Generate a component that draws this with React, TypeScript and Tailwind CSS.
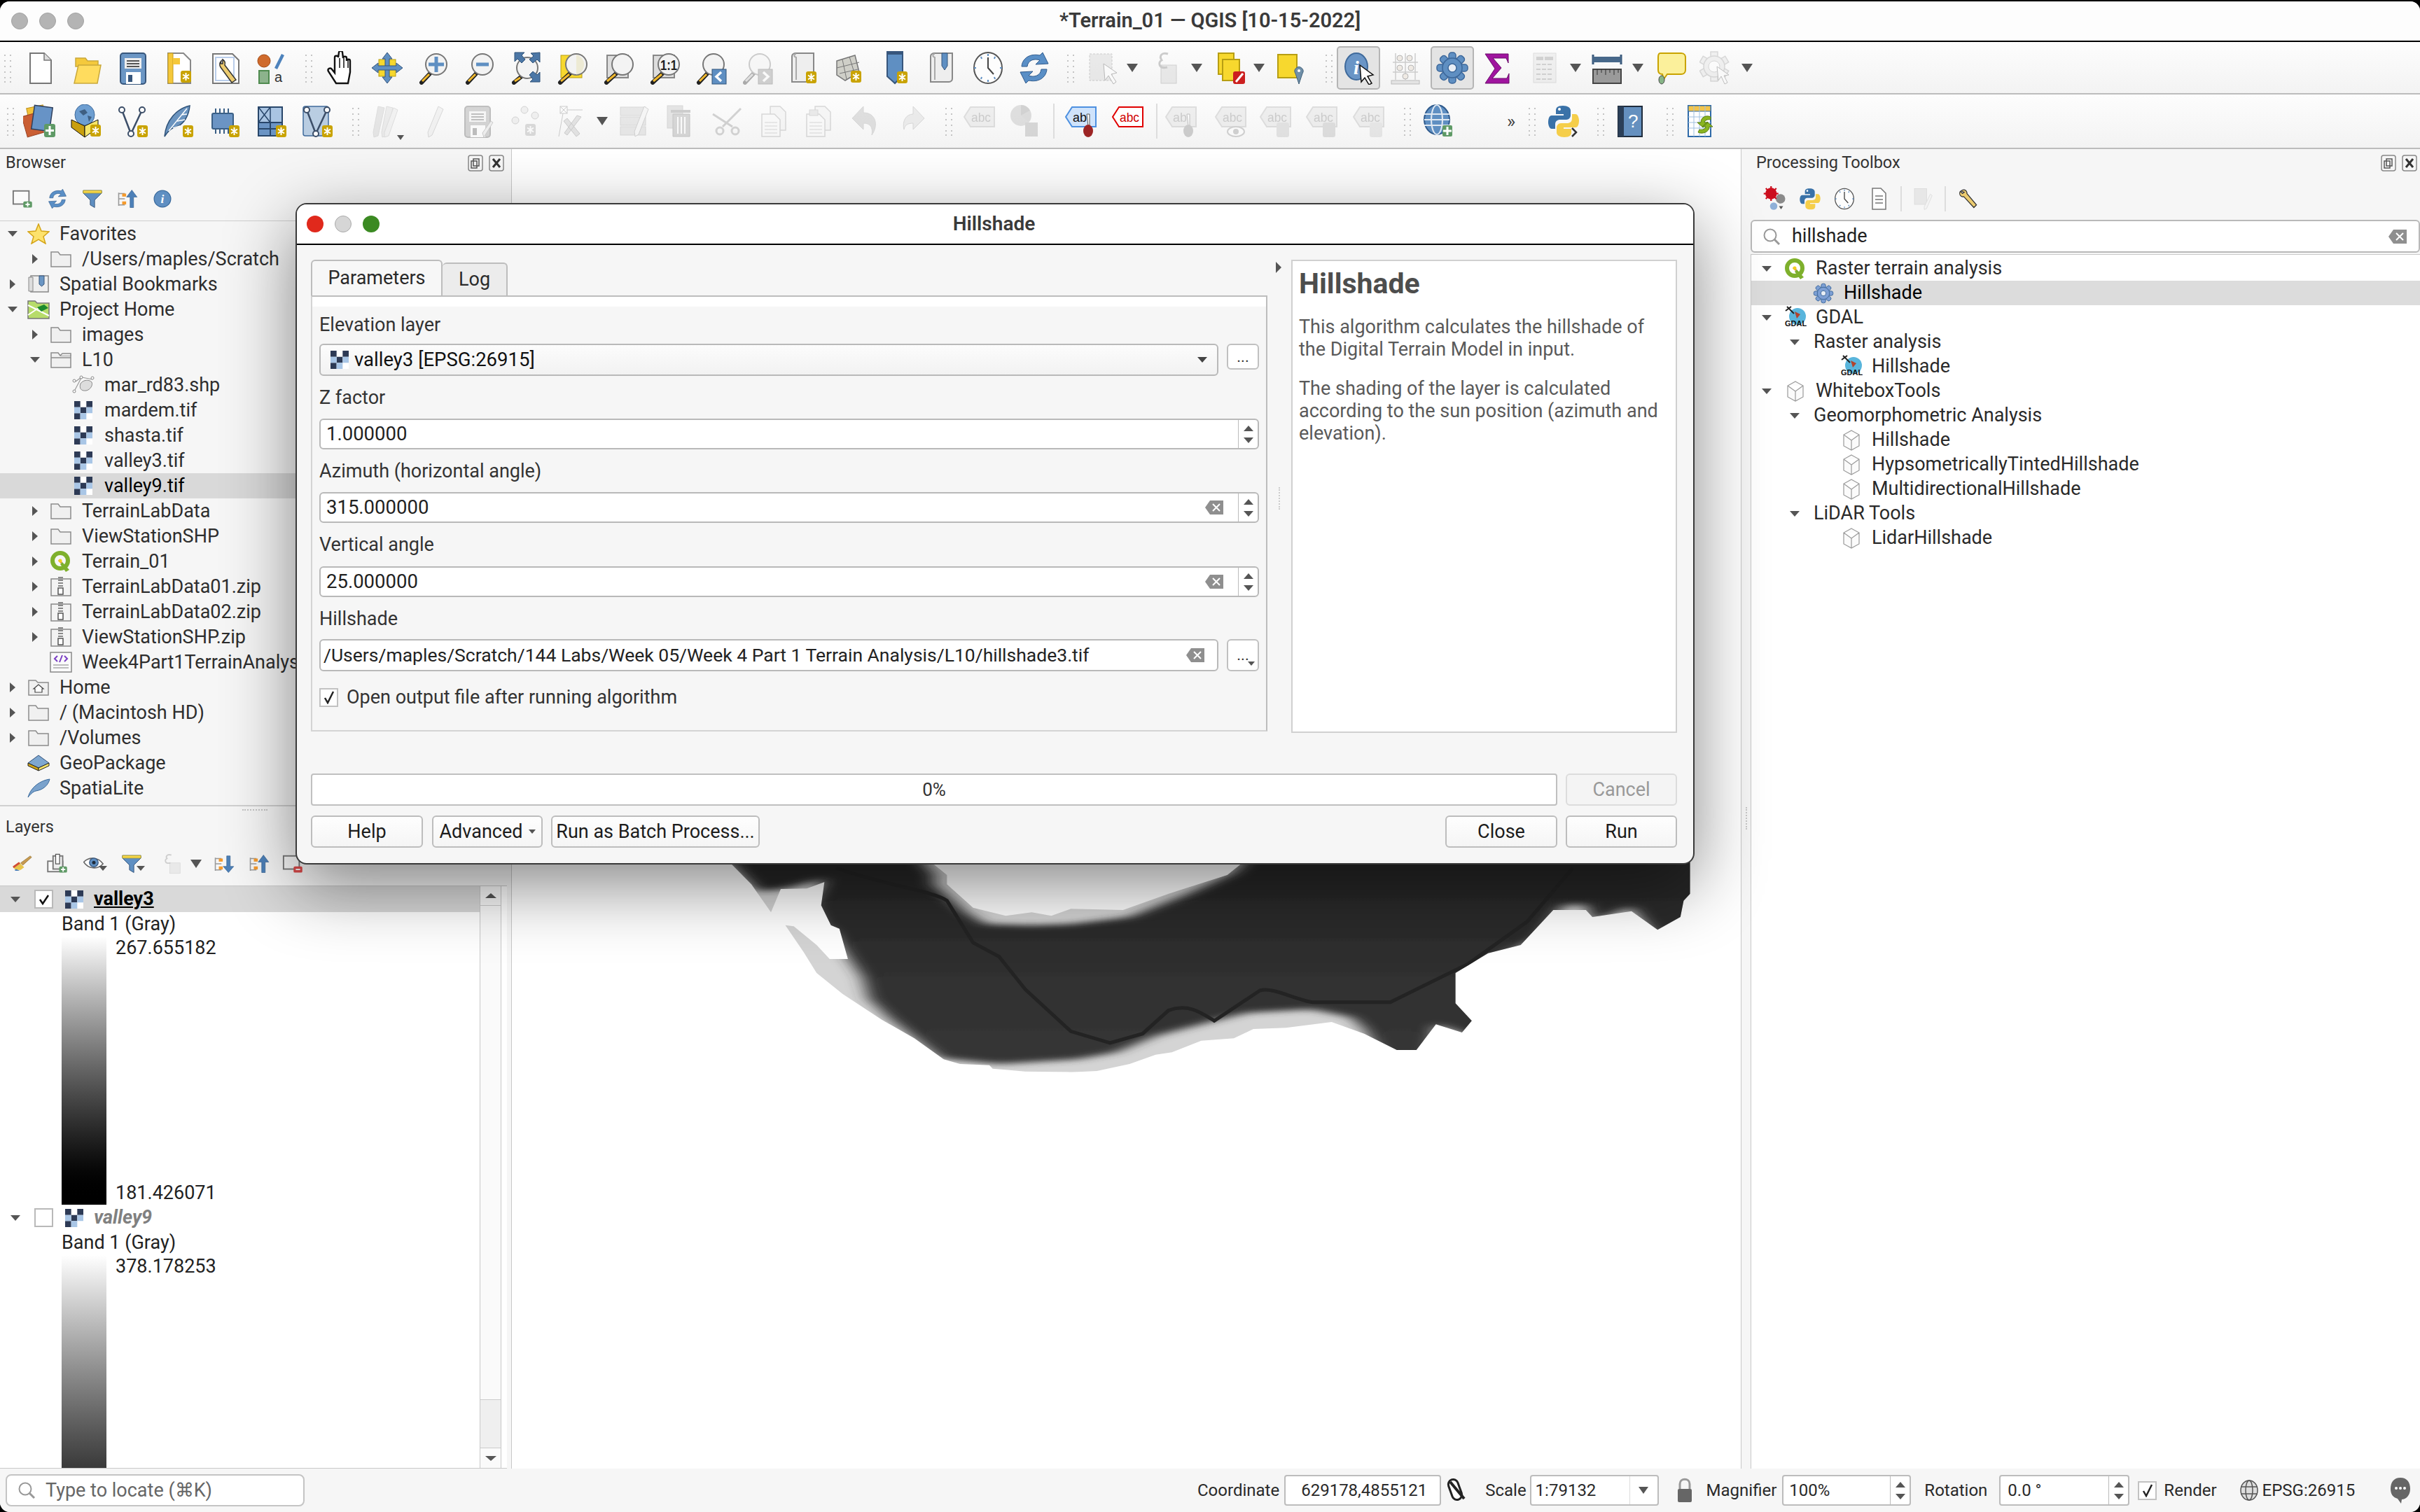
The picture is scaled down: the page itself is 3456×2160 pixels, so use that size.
import type { ReactNode } from 'react';

const Svg = ({ s = 48, dim = false, children }: { s?: number; dim?: boolean; children: ReactNode }) => (
  <svg width={s} height={s} viewBox="0 0 48 48" className={dim ? 'shrink-0 opacity-35 grayscale' : 'shrink-0'}>
    {children}
  </svg>
);

const Badge = ({ x = 30, y = 30 }: { x?: number; y?: number }) => (
  <g>
    <rect x={x} y={y} width="15" height="17" rx="3" fill="#c9a300" />
    <path
      d={`M${x + 7.5} ${y + 3}v11M${x + 3} ${y + 5.5}l9 6M${x + 12} ${y + 5.5}l-9 6`}
      stroke="#fff"
      strokeWidth="2"
    />
  </g>
);

const Lens = ({ children, cx = 28, cy = 19 }: { children?: ReactNode; cx?: number; cy?: number }) => (
  <g>
    <path d={`M${cx - 8} ${cy + 12}L7 45`} stroke="#222" strokeWidth="6" strokeLinecap="round" />
    <path d={`M${cx - 10} ${cy + 14}L8 43`} stroke="#f0b82e" strokeWidth="3" />
    <circle cx={cx} cy={cy} r="15" fill="#f3f3f3" stroke="#777" strokeWidth="2" />
    {children}
  </g>
);

const NewDoc = () => (
  <Svg>
    <path d="M9 3h20l10 10v33H9z" fill="#fff" stroke="#777" strokeWidth="2" />
    <path d="M29 3v10h10" fill="#ddd" stroke="#777" strokeWidth="1.5" />
  </Svg>
);
const OpenFolder = () => (
  <Svg>
    <path d="M8 10h14l3 4h15v8H8z" fill="#f4c93c" stroke="#c9a83a" strokeWidth="1.5" />
    <path d="M12 20h32l-5 26H6z" fill="#ffdc5e" stroke="#c9a83a" strokeWidth="1.5" />
  </Svg>
);
const SaveIcon = ({ pen = false }: { pen?: boolean }) => (
  <Svg dim={pen}>
    <rect x="6" y="3" width="36" height="44" rx="4" fill="#6b96c4" stroke="#37567c" strokeWidth="2" />
    <path d="M12 10h24v15H12z" fill="#eee" />
    <path d="M15 14h18M15 18h18M15 22h18" stroke="#555" strokeWidth="2" />
    <path d="M14 30h21v17H14z" fill="#fff" />
    <path d="M17 34h6v10h-6z" fill="#37567c" />
    {pen && <path d="M46 26L33 47l-2-6 12-17z" fill="#ddd" stroke="#777" />}
  </Svg>
);
const NewLayout = () => (
  <Svg>
    <path d="M8 3h22l10 10v33H8z" fill="#fff" stroke="#888" strokeWidth="2" />
    <path d="M8 3h7v43H8z" fill="#f5c83a" stroke="#c49b1f" />
    <path d="M15 10h10v9H15z" fill="#f5c83a" />
    <Badge x={26} y={28} />
  </Svg>
);
const LayoutManager = () => (
  <Svg>
    <path d="M6 4h28l9 9v33H6z" fill="#fff" stroke="#777" strokeWidth="2" />
    <path d="M10 9h26v33H10z" fill="none" stroke="#b9cdea" strokeWidth="2" />
    <path d="M18 14a7 7 0 0 0-1 9l16 22 6-4-16-21a7 7 0 0 0-3-8v6h-3z" fill="#eccb6f" stroke="#333" strokeWidth="1.5" />
  </Svg>
);
const StyleManager = () => (
  <Svg>
    <circle cx="13" cy="14" r="9" fill="#cf6a2c" stroke="#a34a14" />
    <path d="M28 24l10-20 4 2-10 20z" fill="#4d82bc" />
    <rect x="6" y="28" width="14" height="18" fill="#8cb38c" stroke="#4e8a4e" strokeWidth="2" />
    <text x="28" y="44" fontSize="20" fill="#333" fontFamily="Liberation Sans">a</text>
  </Svg>
);
const Hand = () => (
  <Svg>
    <path
      d="M17 46l-11-17c-2-4 3-6 5-3l4 5V9c0-3 5-3 5 0l1-7c0-3 5-3 5 0l1 8c0-3 5-3 5 0v4c0-3 5-3 5 0v16l-3 16z"
      fill="#fff"
      stroke="#111"
      strokeWidth="2.4"
    />
    <path d="M22 10v14M28 10v14M34 13v11" stroke="#111" strokeWidth="1.5" />
  </Svg>
);
const PanToSel = () => (
  <Svg>
    <rect x="12" y="12" width="24" height="24" fill="#f7d82e" stroke="#b79e12" />
    <path d="M24 2l7 9h-4v26h4l-7 9-7-9h4V11h-4z" fill="#5f8fc2" stroke="#37567c" />
    <path d="M2 24l9-7v4h26v-4l9 7-9 7v-4H11v4z" fill="#5f8fc2" stroke="#37567c" />
  </Svg>
);
const ZoomIn = () => (
  <Svg>
    <Lens>
      <path d="M28 8v22M17 19h22" stroke="#5f8fc2" strokeWidth="5" />
    </Lens>
  </Svg>
);
const ZoomOut = () => (
  <Svg>
    <Lens>
      <path d="M19 19h18" stroke="#5f8fc2" strokeWidth="5" />
    </Lens>
  </Svg>
);
const ZoomFull = () => (
  <Svg>
    <Lens cx={26} cy={24} />
    <path d="M8 2h14l-4 4 5 6-5 5-6-6-4 4zM44 2v14l-4-4-6 5-5-5 6-5-4-4zM44 44H30l4-4-5-6 5-5 6 5 4-4z" fill="#4c77a6" stroke="#2f5278" />
  </Svg>
);
const ZoomSel = () => (
  <Svg>
    <rect x="8" y="6" width="30" height="32" fill="#f7d82e" stroke="#b79e12" />
    <Lens cx={30} cy={19} />
    <path d="M30 5a15 15 0 0 1 0 29z" fill="#e9e4bf" opacity=".6" />
  </Svg>
);
const ZoomLayer = () => (
  <Svg>
    <rect x="8" y="6" width="30" height="32" fill="#ddd" stroke="#888" strokeWidth="2" />
    <Lens cx={30} cy={19} />
  </Svg>
);
const ZoomOne = () => (
  <Svg>
    <rect x="8" y="6" width="30" height="32" fill="#ddd" stroke="#888" strokeWidth="2" />
    <Lens cx={30} cy={19}>
      <text x="18" y="27" fontSize="20" fontWeight="700" fill="#222" fontFamily="Liberation Sans" textLength="24" lengthAdjust="spacingAndGlyphs">1:1</text>
    </Lens>
  </Svg>
);
const ZoomLast = ({ next = false }: { next?: boolean }) => (
  <Svg dim={next}>
    <Lens />
    <rect x="26" y="26" width="20" height="21" fill="#5f8fc2" stroke="#2f5278" />
    <path d={next ? 'M33 30l7 6.5-7 6.5' : 'M39 30l-7 6.5 7 6.5'} stroke="#fff" strokeWidth="3.5" fill="none" />
  </Svg>
);
const ScrollPaper = ({ badge = false, pin = false }: { badge?: boolean; pin?: boolean }) => (
  <Svg>
    <path d="M8 8c0-5 5-5 5-5h26v36c0 5-5 5-5 5H8z" fill="#eee" stroke="#888" strokeWidth="2" />
    <path d="M14 4c-3 0-4 4 0 5v32" fill="none" stroke="#aaa" strokeWidth="2" />
    {pin && <path d="M24 3h8v18l-4 6-4-6z" fill="#5f8fc2" stroke="#37567c" />}
    {badge && <Badge x={28} y={29} />}
  </Svg>
);
const MeshBadge = () => (
  <Svg>
    <path d="M6 14L32 6l6 24-20 12-12-8z" fill="#cfcfc8" stroke="#777" strokeWidth="1.5" />
    <path d="M14 12l6 28M6 24l32-8M10 32l26-6M24 8l8 26" stroke="#777" fill="none" />
    <Badge x={26} y={28} />
  </Svg>
);
const NewBookmark = () => (
  <Svg>
    <path d="M12 1h22v34l-11 11-11-10z" fill="#5f8fc2" stroke="#37567c" strokeWidth="2" />
    <path d="M12 1h22v4H12z" fill="#37567c" />
    <Badge x={26} y={29} />
  </Svg>
);
const ClockIcon = ({ s = 48 }: { s?: number }) => (
  <Svg s={s}>
    <ellipse cx="24" cy="24" rx="20" ry="22" fill="#fdfdfd" stroke="#555" strokeWidth="2" />
    <path d="M24 9v15l8 9" fill="none" stroke="#444" strokeWidth="2" />
    <path d="M24 4v3M24 41v3M4 24h3M41 24h3M14 8l1 3M34 8l-1 3M14 40l1-3M34 40l-1-3" stroke="#5f8fc2" strokeWidth="2" />
  </Svg>
);
const RefreshIcon = ({ s = 48 }: { s?: number }) => (
  <Svg s={s}>
    <path d="M6 22C7 10 18 3 32 6l4-4 8 16-18 1 6-6c-8-3-17 0-18 9z" fill="#5a8fc6" stroke="#2f5a8c" />
    <path d="M42 26c-1 12-12 19-26 16l-4 4-8-16 18-1-6 6c8 3 17 0 18-9z" fill="#5a8fc6" stroke="#2f5a8c" />
  </Svg>
);
const SelectIcon = () => (
  <Svg dim>
    <rect x="6" y="4" width="32" height="38" fill="#ccc" stroke="#777" strokeDasharray="3 2" />
    <path d="M26 18l2 24 5-7 7 12 4-3-7-11 8-2z" fill="#fff" stroke="#444" />
  </Svg>
);
const ExprSelect = () => (
  <Svg dim>
    <rect x="14" y="20" width="22" height="26" fill="#ccc" stroke="#888" />
    <path d="M24 4c-9-3-13 3-9 9-6 3-4 13 8 10" fill="none" stroke="#777" strokeWidth="3" />
  </Svg>
);
const Deselect = () => (
  <Svg>
    <rect x="7" y="3" width="22" height="30" fill="#f7d82e" stroke="#b79e12" strokeWidth="2" />
    <rect x="13" y="12" width="24" height="30" fill="#f7d82e" stroke="#b79e12" strokeWidth="2" />
    <rect x="28" y="29" width="17" height="18" rx="3" fill="#cc1f1f" />
    <path d="M32 44l10-12" stroke="#fff" strokeWidth="3" />
  </Svg>
);
const SelectPin = () => (
  <Svg>
    <rect x="7" y="5" width="27" height="33" fill="#f7d82e" stroke="#b79e12" strokeWidth="2" />
    <path d="M37 47l-5-15a6 6 0 1 1 10 0z" fill="#6f8fa8" stroke="#44637c" />
    <circle cx="37" cy="28" r="2" fill="#fff" />
  </Svg>
);
const Identify = () => (
  <Svg>
    <ellipse cx="21" cy="22" rx="16" ry="19" fill="#6a95c6" stroke="#3f6a9b" strokeWidth="2" />
    <text x="21" y="33" fontSize="28" fontStyle="italic" fontWeight="700" textAnchor="middle" fill="#fff" fontFamily="Liberation Serif">i</text>
    <path d="M26 20l2 24 5-6 6 10 4-2-6-10 8-2z" fill="#fff" stroke="#111" strokeWidth="1.5" />
  </Svg>
);
const Abacus = () => (
  <Svg>
    <path d="M10 3v38M24 3v38M38 3v38M6 16h36M6 30h36" stroke="#ccc" strokeWidth="1.5" />
    <circle cx="16" cy="10" r="4" fill="#efeae4" stroke="#b5b5b5" />
    <circle cx="30" cy="10" r="4" fill="#efeae4" stroke="#b5b5b5" />
    <circle cx="16" cy="24" r="4" fill="#efeae4" stroke="#b5b5b5" />
    <circle cx="32" cy="24" r="4" fill="#efeae4" stroke="#b5b5b5" />
    <circle cx="24" cy="36" r="4" fill="#efeae4" stroke="#b5b5b5" />
    <rect x="4" y="42" width="40" height="5" fill="#e4e4e4" stroke="#bbb" />
  </Svg>
);
const Gear = ({ s = 48, fill = '#5f8fc2' }: { s?: number; fill?: string }) => (
  <Svg s={s}>
    <g fill={fill} stroke="#3c679a" strokeWidth="1.5">
      {[0, 45, 90, 135, 180, 225, 270, 315].map((a) => (
        <rect key={a} x="19" y="2" width="10" height="14" rx="4" transform={`rotate(${a} 24 24)`} />
      ))}
      <circle cx="24" cy="24" r="14" />
    </g>
    <circle cx="24" cy="24" r="6" fill="#e8eef6" stroke="#3c679a" strokeWidth="1.5" />
  </Svg>
);
const Sigma = () => (
  <Svg>
    <path d="M7 4h33v13l-3-7H18l12 14-13 15h21l3-7v14H7l14-21z" fill="#a0149f" stroke="#6a0c6a" />
  </Svg>
);
const TableDim = () => (
  <Svg dim>
    <rect x="8" y="3" width="32" height="42" fill="#ddd" stroke="#aaa" />
    <path d="M12 8h10v5H12zM24 8h12v5H24z" fill="#888" />
    <path d="M12 19h24M12 26h24M12 33h24M12 40h24" stroke="#888" strokeWidth="2" strokeDasharray="6 2" />
  </Svg>
);
const Ruler = () => (
  <Svg>
    <path d="M4 5v14M44 5v14" stroke="#3b5a7c" strokeWidth="3" />
    <rect x="4" y="8" width="40" height="8" fill="#47688a" />
    <rect x="4" y="26" width="40" height="20" fill="#9a9a9a" stroke="#444" strokeWidth="2" />
    <path d="M10 26v8M16 26v5M22 26v8M28 26v5M34 26v8M40 26v5" stroke="#333" />
  </Svg>
);
const Annotation = () => (
  <Svg>
    <path d="M8 3h30c5 0 6 4 6 6v18c0 4-3 6-6 6H18l-5 7-2-7c-4 0-6-2-6-6V9c0-3 1-6 3-6z" fill="#fbf09b" stroke="#c9a300" strokeWidth="2" />
    <ellipse cx="10" cy="41" rx="4" ry="6" fill="#87b587" stroke="#444" />
  </Svg>
);
const SettingsDim = () => (
  <Svg dim>
    <g fill="#ddd" stroke="#999" strokeWidth="1.5">
      {[0, 60, 120, 180, 240, 300].map((a) => (
        <rect key={a} x="16" y="1" width="10" height="12" transform={`rotate(${a} 21 22)`} />
      ))}
      <circle cx="21" cy="22" r="15" />
    </g>
    <circle cx="21" cy="22" r="8" fill="#fff" stroke="#999" />
    <path d="M25 22l2 20 4-6 5 11 4-2-5-10 7-1z" fill="#fff" stroke="#555" />
  </Svg>
);
const DataSources = () => (
  <Svg>
    <rect x="8" y="3" width="24" height="34" transform="rotate(-12 20 20)" fill="#f3c23a" stroke="#b98e18" />
    <rect x="2" y="14" width="24" height="30" transform="rotate(-16 14 30)" fill="#ca5e33" stroke="#9b4526" />
    <rect x="14" y="3" width="26" height="34" transform="rotate(8 27 20)" fill="#6793c6" stroke="#2f3f5c" strokeWidth="1.5" />
    <rect x="30" y="28" width="16" height="19" rx="3" fill="#5f9a66" />
    <path d="M38 31v13M32 37.5h12" stroke="#fff" strokeWidth="3" />
  </Svg>
);
const NewGpkg = () => (
  <Svg>
    <ellipse cx="22" cy="15" rx="14" ry="15" fill="#6d9ed1" stroke="#3f6a9b" />
    <path d="M14 10l8-3 4 5-6 4zM26 16l6 2-4 7z" fill="#3e5f82" />
    <path d="M3 22l19 9v16L3 33z" fill="#c99f0e" stroke="#111" />
    <path d="M22 31l19-9v11L22 47z" fill="#f6e66a" stroke="#111" />
    <Badge x={30} y={29} />
  </Svg>
);
const NewVertex = ({ framed = false }: { framed?: boolean }) => (
  <Svg>
    {framed && <rect x="4" y="3" width="36" height="42" rx="3" fill="#b9cde2" stroke="#3f6a9b" strokeWidth="1.5" />}
    <path d="M9 8l13 34 16-34" fill="none" stroke="#3c4e68" strokeWidth="2.5" />
    <circle cx="9" cy="8" r="4" fill="#fff" stroke="#3c4e68" strokeWidth="2" />
    <circle cx="38" cy="8" r="4" fill="#fff" stroke="#3c4e68" strokeWidth="2" />
    <circle cx="22" cy="42" r="4" fill="#fff" stroke="#3c4e68" strokeWidth="2" />
    <Badge x={31} y={30} />
  </Svg>
);
const Feather = ({ badge = true }: { badge?: boolean }) => (
  <Svg>
    <path d="M4 46C6 22 22 6 40 2c-1 12-7 28-24 32-4 1-8 6-12 12z" fill="#6b94bf" stroke="#2f5278" strokeWidth="1.5" />
    <path d="M10 38c8-10 16-20 26-32M16 34l10-3M22 24l11-2M28 15l8-1" stroke="#fff" strokeWidth="1.5" fill="none" />
    {badge && <Badge x={30} y={30} />}
  </Svg>
);
const Chip = () => (
  <Svg>
    <path d="M11 6v36M17 6v36M23 6v36M29 6v36" stroke="#3a5f86" strokeWidth="2" />
    <rect x="6" y="13" width="30" height="22" rx="2" fill="#6b94c4" stroke="#3a5f86" strokeWidth="2" />
    <Badge x={30} y={30} />
  </Svg>
);
const NewMesh = () => (
  <Svg>
    <rect x="6" y="4" width="34" height="22" fill="#a9c4e2" stroke="#28466a" strokeWidth="2" />
    <path d="M6 4l17 22M23 4L6 26M23 4v22" stroke="#28466a" strokeWidth="1.5" />
    <rect x="6" y="26" width="34" height="19" fill="#6b94c4" stroke="#28466a" strokeWidth="2" />
    <path d="M23 26v19M6 35h34" stroke="#28466a" strokeWidth="2" />
    <Badge x={31} y={30} />
  </Svg>
);
const Pencils = () => (
  <Svg dim>
    <path d="M14 3l9 2-9 40-6 2-1-7z" fill="#c9c2bd" stroke="#aaa" />
    <path d="M26 3l9 2-9 40-6 2-1-7z" fill="#d8d2cd" stroke="#aaa" />
    <path d="M36 5l6 3-13 37-6 2 0-7z" fill="#e6e2de" stroke="#aaa" />
  </Svg>
);
const Pencil = () => (
  <Svg dim>
    <path d="M32 3l7 4-16 37-5 3-1-7z" fill="#e5e5de" stroke="#999" />
  </Svg>
);
const AddPoints = () => (
  <Svg dim>
    <circle cx="21" cy="8" r="5" fill="#ddd" stroke="#888" />
    <circle cx="36" cy="16" r="5" fill="#ddd" stroke="#888" />
    <circle cx="8" cy="23" r="5" fill="#ddd" stroke="#888" />
    <Badge x={22} y={28} />
  </Svg>
);
const VertexTool = () => (
  <Svg dim>
    <rect x="6" y="3" width="10" height="10" fill="#fff" stroke="#777" />
    <path d="M6 3l10 10M16 3L6 13M16 8h22M10 13L4 46" stroke="#777" />
    <path d="M16 20l18 22-5 4-18-22zM36 18L16 44l-4-3 18-25z" fill="#bbb" stroke="#777" />
  </Svg>
);
const EditTable = () => (
  <Svg dim>
    <rect x="4" y="4" width="36" height="12" fill="#c8c8b0" stroke="#999" />
    <rect x="4" y="18" width="36" height="12" fill="#c8c8b0" stroke="#999" />
    <rect x="4" y="32" width="36" height="12" fill="#c8c8b0" stroke="#999" />
    <path d="M38 3l6 4-14 36-5 3-1-7z" fill="#eee" stroke="#888" />
  </Svg>
);
const Trash = () => (
  <Svg dim>
    <rect x="5" y="2" width="22" height="32" fill="#c9b9ad" stroke="#999" />
    <path d="M10 8h28v4H10z" fill="#a5726a" />
    <path d="M13 14h24v32H13z" fill="#c78c82" stroke="#8f5a52" />
    <path d="M20 18v24M25 18v24M30 18v24" stroke="#fff" strokeWidth="2" />
  </Svg>
);
const Scissors = () => (
  <Svg dim>
    <path d="M4 14l28 18M44 6L18 32" stroke="#888" strokeWidth="3" />
    <circle cx="36" cy="38" r="5" fill="none" stroke="#a88" strokeWidth="3" />
    <circle cx="14" cy="38" r="5" fill="none" stroke="#a88" strokeWidth="3" />
  </Svg>
);
const CopyDoc = ({ clip = false }: { clip?: boolean }) => (
  <Svg dim>
    <path d="M20 3h14l8 8v26H20z" fill="#eee" stroke="#999" strokeWidth="1.5" />
    <path d="M8 14h18l8 8v24H8z" fill="#f8f8f8" stroke="#999" strokeWidth="1.5" />
    <path d="M12 26h18M12 31h18M12 36h18M12 41h18" stroke="#999" />
    {clip && <rect x="12" y="8" width="12" height="8" fill="#ccc" stroke="#999" />}
  </Svg>
);
const UndoIcon = ({ redo = false }: { redo?: boolean }) => (
  <Svg dim>
    <path
      d={redo ? 'M26 3l16 17-16 16v-9c-8 0-12 3-13 9-3-12 3-22 13-22z' : 'M22 3L6 20l16 16v-9c10 0 14 6 12 17 10-14 6-32-12-32z'}
      fill={redo ? '#c9d2d8' : '#c9a898'}
      stroke="#999"
    />
  </Svg>
);
const AbcTag = ({ label = 'abc', pin = '', eye = false, badge = '', red = false, blue = false }: { label?: string; pin?: string; eye?: boolean; badge?: string; red?: boolean; blue?: boolean }) => (
  <Svg dim={!red && !blue}>
    <path
      d="M12 4h34v28H12L3 18z"
      fill={red ? '#fff' : blue ? '#cfe3fb' : '#ddd8c8'}
      stroke={red ? '#e00000' : blue ? '#4d90e0' : '#aaa'}
      strokeWidth="2"
    />
    <text x="13" y="25" fontSize="19" fill={red ? '#d00000' : blue ? '#111' : '#777'} fontFamily="Liberation Sans" textLength={label === 'ab' ? 20 : 28} lengthAdjust="spacingAndGlyphs">{label}</text>
    {pin && <path d="M33 14h4v16l-2 1z" fill="#fff" stroke="#555" />}
    {pin && <ellipse cx="35" cy="38" rx="7" ry="9" fill={pin} />}
    {eye && <ellipse cx="32" cy="39" rx="12" ry="7" fill="#fff" stroke="#888" strokeWidth="2" />}
    {eye && <circle cx="32" cy="39" r="4" fill="#888" />}
    {badge && <rect x="26" y="26" width="18" height="21" rx="3" fill={badge} />}
  </Svg>
);
const PieIcon = () => (
  <Svg dim>
    <circle cx="20" cy="16" r="15" fill="#b9b06a" />
    <path d="M20 16V1a15 15 0 0 1 13 8z" fill="#c87a6a" />
    <path d="M20 16l13-7a15 15 0 0 1-2 16z" fill="#88b09a" />
    <rect x="26" y="26" width="18" height="20" fill="#88a088" />
  </Svg>
);
const Globe = () => (
  <Svg>
    <ellipse cx="22" cy="22" rx="18" ry="21" fill="#5f8fc2" stroke="#2f5a8c" strokeWidth="2" />
    <ellipse cx="22" cy="22" rx="8" ry="21" fill="none" stroke="#dfe8f2" strokeWidth="2" />
    <path d="M4 14h36M4 22h36M4 30h36" stroke="#dfe8f2" strokeWidth="2" />
    <rect x="30" y="30" width="14" height="16" rx="2" fill="#5f9a66" />
    <path d="M37 32v12M31 38h12" stroke="#fff" strokeWidth="3" />
  </Svg>
);
const Python = ({ s = 48, arrow = true }: { s?: number; arrow?: boolean }) => (
  <Svg s={s}>
    <path d="M23 2c-8 0-10 3-10 7v5h11v2H7c-4 0-5 6-5 10s2 9 5 9h5v-6c0-5 3-7 7-7h9c3 0 6-3 6-6V9c0-4-4-7-11-7z" fill="#3a72a8" />
    <path d="M25 47c8 0 10-3 10-7v-5H24v-2h17c4 0 5-6 5-10s-2-9-5-9h-5v6c0 5-3 7-7 7h-9c-3 0-6 3-6 6v7c0 4 4 7 11 7z" fill="#f5ce4a" />
    <circle cx="18" cy="7" r="2" fill="#fff" />
    {arrow && <path d="M36 34l6 6-6 6" fill="none" stroke="#333" strokeWidth="2.5" />}
  </Svg>
);
const HelpBook = () => (
  <Svg>
    <rect x="7" y="3" width="34" height="43" fill="#6590bf" stroke="#1f2c3c" strokeWidth="2" />
    <rect x="7" y="3" width="8" height="43" fill="#2b3f58" />
    <text x="21" y="33" fontSize="26" fill="#fff" fontFamily="Liberation Sans">?</text>
  </Svg>
);
const TableRefresh = () => (
  <Svg>
    <rect x="8" y="2" width="32" height="44" fill="#fff" stroke="#2f6aa8" strokeWidth="2" />
    <rect x="8" y="2" width="32" height="8" fill="#f2c44a" stroke="#2f6aa8" />
    <path d="M16 2v44M24 2v44M32 2v44M8 18h32M8 26h32M8 34h32" stroke="#9fc0e0" />
    <path d="M40 18c-6-3-14 0-14 8h-5l8 7 7-7h-5c0-3 5-5 9-4zM22 40c6 3 16 0 16-8h5l-8-7-7 7h5c0 3-5 5-9 4z" fill="#8ab520" stroke="#5a7f10" />
  </Svg>
);

const Grip = () => (
  <svg width="10" height="42" viewBox="0 0 10 42" className="shrink-0">
    {[2, 10, 18, 26, 34, 40].map((y) => (
      <g key={y} fill="#c4c4c4">
        <rect x="0" y={y} width="2" height="2" />
        <rect x="8" y={y} width="2" height="2" />
      </g>
    ))}
  </svg>
);

const Cell = ({ children, className = '' }: { children: ReactNode; className?: string }) => (
  <div className={`relative flex h-[50px] w-[66px] shrink-0 items-center justify-center ${className}`}>{children}</div>
);
const DropArrow = ({ className = '' }: { className?: string }) => (
  <div className={`h-0 w-0 shrink-0 border-x-[8px] border-t-[12px] border-x-transparent border-t-[#555] ${className}`} />
);
const Active = ({ children, className = '' }: { children: ReactNode; className?: string }) => (
  <div className={`flex h-[62px] w-[62px] shrink-0 items-center justify-center rounded-[5px] border-2 border-[#b5b5b5] bg-[#e4e4e4] ${className}`}>
    {children}
  </div>
);

const TopToolbar = () => (
  <div className="flex h-[75px] shrink-0 items-center bg-gradient-to-b from-[#fdfdfd] to-[#f3f3f3] border-b-2 border-[#bcbcbc] pl-[6px]">
    <Grip />
    <div className="ml-[9px] flex">
      <Cell><NewDoc /></Cell>
      <Cell><OpenFolder /></Cell>
      <Cell><SaveIcon /></Cell>
      <Cell><NewLayout /></Cell>
      <Cell><LayoutManager /></Cell>
      <Cell><StyleManager /></Cell>
    </div>
    <div className="ml-[15px]"><Grip /></div>
    <div className="ml-[8px] flex">
      <Cell><Hand /></Cell>
      <Cell><PanToSel /></Cell>
      <Cell><ZoomIn /></Cell>
      <Cell><ZoomOut /></Cell>
      <Cell><ZoomFull /></Cell>
      <Cell><ZoomSel /></Cell>
      <Cell><ZoomLayer /></Cell>
      <Cell><ZoomOne /></Cell>
      <Cell><ZoomLast /></Cell>
      <Cell><ZoomLast next /></Cell>
      <Cell><ScrollPaper badge /></Cell>
      <Cell><MeshBadge /></Cell>
      <Cell><NewBookmark /></Cell>
      <Cell><ScrollPaper pin /></Cell>
      <Cell><ClockIcon /></Cell>
      <Cell><RefreshIcon /></Cell>
    </div>
    <div className="ml-[14px]"><Grip /></div>
    <Cell className="ml-[7px]"><SelectIcon /></Cell>
    <DropArrow className="ml-[2px]" />
    <Cell className="ml-[10px]"><ExprSelect /></Cell>
    <DropArrow />
    <Cell className="ml-[7px]"><Deselect /></Cell>
    <DropArrow />
    <Cell className="ml-[3px]"><SelectPin /></Cell>
    <div className="ml-[18px]"><Grip /></div>
    <Active className="ml-[6px]"><Identify /></Active>
    <Cell className="ml-[3px]"><Abacus /></Cell>
    <Active className="ml-[3px]"><Gear /></Active>
    <Cell><Sigma /></Cell>
    <Cell className="ml-[2px]"><TableDim /></Cell>
    <DropArrow className="ml-[3px]" />
    <Cell className="ml-[4px]"><Ruler /></Cell>
    <DropArrow className="ml-[3px]" />
    <Cell className="ml-[7px]"><Annotation /></Cell>
    <Cell className="ml-[-2px]"><SettingsDim /></Cell>
    <DropArrow className="ml-[3px]" />
  </div>
);

const BottomToolbar = () => (
  <div className="flex h-[78px] shrink-0 items-center bg-gradient-to-b from-[#fdfdfd] to-[#f3f3f3] border-b-2 border-[#bcbcbc] pl-[10px]">
    <Grip />
    <div className="ml-[4px] flex">
      <Cell><DataSources /></Cell>
      <Cell><NewGpkg /></Cell>
      <Cell><NewVertex /></Cell>
      <Cell><Feather /></Cell>
      <Cell><Chip /></Cell>
      <Cell><NewMesh /></Cell>
      <Cell><NewVertex framed /></Cell>
    </div>
    <div className="ml-[17px]"><Grip /></div>
    <Cell className="ml-[4px]">
      <Pencils />
      <div className="absolute bottom-[-2px] right-[6px] h-0 w-0 border-x-[5px] border-t-[7px] border-x-transparent border-t-[#555]" />
    </Cell>
    <Cell className="ml-[2px]"><Pencil /></Cell>
    <Cell className="ml-[-2px]"><SaveIcon pen /></Cell>
    <Cell className="ml-[4px]"><AddPoints /></Cell>
    <Cell><VertexTool /></Cell>
    <DropArrow className="ml-[1px]" />
    <Cell className="ml-[5px]"><EditTable /></Cell>
    <Cell><Trash /></Cell>
    <Cell><Scissors /></Cell>
    <Cell><CopyDoc /></Cell>
    <Cell className="ml-[-2px]"><CopyDoc clip /></Cell>
    <Cell className="ml-[1px]"><UndoIcon /></Cell>
    <Cell className="ml-[1px]"><UndoIcon redo /></Cell>
    <div className="ml-[15px]"><Grip /></div>
    <Cell className="ml-[5px]"><AbcTag /></Cell>
    <Cell className="ml-[-2px]"><PieIcon /></Cell>
    <div className="ml-[9px] h-[50px] w-[2px] bg-[#ddd]" />
    <Cell className="ml-[4px]"><AbcTag label="ab" blue pin="#9c2424" /></Cell>
    <Cell className="ml-[1px]"><AbcTag red /></Cell>
    <div className="ml-[8px] h-[50px] w-[2px] bg-[#ddd]" />
    <Cell><AbcTag label="ab" pin="#8c7878" /></Cell>
    <Cell className="ml-[5px]"><AbcTag eye /></Cell>
    <Cell className="ml-[-2px]"><AbcTag badge="#b8b8b8" /></Cell>
    <Cell><AbcTag badge="#aaa" /></Cell>
    <Cell className="ml-[1px]"><AbcTag badge="#c8c4b4" /></Cell>
    <div className="ml-[18px]"><Grip /></div>
    <Cell className="ml-[6px]"><Globe /></Cell>
    <span className="ml-[65px] text-[26px] text-[#444]">»</span>
    <div className="ml-[19px]"><Grip /></div>
    <Cell className="ml-[7px]"><Python /></Cell>
    <div className="ml-[15px]"><Grip /></div>
    <Cell className="ml-[4px]"><HelpBook /></Cell>
    <div className="ml-[19px]"><Grip /></div>
    <Cell className="ml-[4px]"><TableRefresh /></Cell>
  </div>
);

const Raster = ({ s = 26 }: { s?: number }) => (
  <svg width={s} height={s} viewBox="0 0 6 6" className="shrink-0">
    <rect width="6" height="6" fill="#fff" />
    <path d="M0 0h2v2H0zM2 2h2v2H2zM4 0h2v2H4zM0 4h2v2H0z" fill="#2d3a55" />
    <path d="M2 4h2v2H2zM4 2h2v2H4zM0 2h2v2H0z" fill="#a9c6e6" />
  </svg>
);
const Folder = ({ open = false }: { open?: boolean }) => (
  <svg width="30" height="26" viewBox="0 0 30 26" className="shrink-0">
    <path d="M1 5V3h10l3 4h15v17H1z" fill="#f0f0f0" stroke="#8c8c8c" strokeWidth="1.5" />
    {open && <path d="M14 7l3-3h12v3" fill="#f0f0f0" stroke="#8c8c8c" strokeWidth="1.5" />}
    {open && <path d="M1 10h28" stroke="#8c8c8c" strokeWidth="1.5" />}
  </svg>
);
const StarIcon = () => (
  <svg width="32" height="30" viewBox="0 0 32 30" className="shrink-0">
    <path d="M16 1l4 10 11 1-8 7 3 10-10-6-10 6 3-10-8-7 11-1z" fill="#fde26c" stroke="#d4a417" strokeWidth="1.5" />
  </svg>
);
const SmallScroll = () => (
  <svg width="30" height="26" viewBox="0 0 30 26" className="shrink-0">
    <path d="M4 1h25v23H4z" fill="#eee" stroke="#888" strokeWidth="1.5" />
    <path d="M1 3h6v20H1z" fill="#ddd" stroke="#888" />
    <path d="M16 1h7v12l-3.5 3-3.5-3z" fill="#6b96c4" stroke="#37567c" />
  </svg>
);
const ProjectHome = () => (
  <svg width="32" height="28" viewBox="0 0 32 28" className="shrink-0">
    <path d="M1 2h10l3 3h17v22H1z" fill="#b7dc6a" stroke="#777" strokeWidth="1.5" />
    <path d="M1 8l30 15M1 22l18-12" stroke="#fff" strokeWidth="2" fill="none" />
    <path d="M14 11l10-4 6 5-10 5z" fill="#1b8a2c" />
  </svg>
);
const ShpIcon = () => (
  <svg width="32" height="28" viewBox="0 0 32 28" className="shrink-0">
    <path d="M5 9L13 3M4 21L13 4M14 3l15 3" stroke="#999" strokeWidth="1.2" fill="none" />
    <path d="M12 12c4-6 13-6 16-2 2 4-2 11-8 12-8 1-10-4-8-10z" fill="#ddd" stroke="#888" />
    <circle cx="3" cy="8" r="2" fill="#fff" stroke="#888" />
    <circle cx="13" cy="3" r="2" fill="#fff" stroke="#888" />
    <circle cx="29" cy="4" r="2" fill="#fff" stroke="#888" />
    <circle cx="3" cy="23" r="2" fill="#fff" stroke="#888" />
  </svg>
);
const QgisLogo = ({ s = 32 }: { s?: number }) => (
  <svg width={s} height={s} viewBox="0 0 32 32" className="shrink-0">
    <circle cx="15" cy="15" r="11" fill="none" stroke="#7eb02c" strokeWidth="6" />
    <path d="M14 13l4 4-2 2-4-4z" fill="#f08a24" />
    <path d="M18 17l10 11-5 3-8-11z" fill="#7eb02c" />
    <circle cx="15" cy="15" r="2.5" fill="#f0cf24" />
  </svg>
);
const ZipIcon = () => (
  <svg width="30" height="28" viewBox="0 0 30 28" className="shrink-0">
    <rect x="1" y="3" width="28" height="24" fill="#f3f3f3" stroke="#888" strokeWidth="1.5" />
    <path d="M11 1h7M11 5h7M11 9h7M11 13h7" stroke="#666" strokeWidth="1.5" />
    <rect x="11" y="16" width="7" height="9" fill="#fff" stroke="#555" strokeWidth="1.5" />
  </svg>
);
const CodeIcon = () => (
  <svg width="32" height="30" viewBox="0 0 32 30" className="shrink-0">
    <rect x="1" y="1" width="30" height="28" fill="#fafafa" stroke="#888" strokeWidth="1.5" />
    <path d="M11 6l-4 4 4 4M21 6l4 4-4 4M18 5l-4 10" stroke="#7b3fc4" strokeWidth="2" fill="none" />
    <path d="M5 19h22M5 23h22" stroke="#aaa" strokeWidth="1.5" />
  </svg>
);
const HomeIcon = () => (
  <svg width="30" height="26" viewBox="0 0 30 26" className="shrink-0">
    <path d="M1 5V3h10l3 3h15v18H1z" fill="#f0f0f0" stroke="#8c8c8c" strokeWidth="1.5" />
    <path d="M15 9l-7 6h2v5h10v-5h2z" fill="#fff" stroke="#444" strokeWidth="1.2" />
  </svg>
);
const GpkgIcon = () => (
  <svg width="32" height="24" viewBox="0 0 32 24" className="shrink-0">
    <path d="M1 12l15-11 15 11-15 7z" fill="#7ea7d0" stroke="#2f4f78" />
    <path d="M1 12l15 7v4L1 16z" fill="#d2a616" stroke="#222" />
    <path d="M31 12l-15 7v4l15-7z" fill="#f8e46a" stroke="#222" />
  </svg>
);
const SmallFeather = () => (
  <svg width="34" height="28" viewBox="0 0 34 28" className="shrink-0">
    <path d="M2 27C6 12 20 3 33 1c-2 8-8 15-20 17-4 1-8 5-11 9z" fill="#7aa2cc" stroke="#3a6a9c" />
  </svg>
);
const Expander = ({ open = false }: { open?: boolean }) =>
  open ? (
    <div className="h-0 w-0 border-x-[7px] border-t-[8px] border-x-transparent border-t-[#555]" />
  ) : (
    <div className="h-0 w-0 border-y-[7px] border-l-[8px] border-y-transparent border-l-[#555]" />
  );

interface Row {
  label: string;
  icon: ReactNode;
  level: 0 | 1 | 2;
  arrow?: 'open' | 'closed';
  active?: boolean;
}

const browserRows: Row[] = [
  { label: 'Favorites', icon: <StarIcon />, level: 0, arrow: 'open' },
  { label: '/Users/maples/Scratch', icon: <Folder />, level: 1, arrow: 'closed' },
  { label: 'Spatial Bookmarks', icon: <SmallScroll />, level: 0, arrow: 'closed' },
  { label: 'Project Home', icon: <ProjectHome />, level: 0, arrow: 'open' },
  { label: 'images', icon: <Folder />, level: 1, arrow: 'closed' },
  { label: 'L10', icon: <Folder open />, level: 1, arrow: 'open' },
  { label: 'mar_rd83.shp', icon: <ShpIcon />, level: 2 },
  { label: 'mardem.tif', icon: <Raster />, level: 2 },
  { label: 'shasta.tif', icon: <Raster />, level: 2 },
  { label: 'valley3.tif', icon: <Raster />, level: 2 },
  { label: 'valley9.tif', icon: <Raster />, level: 2, active: true },
  { label: 'TerrainLabData', icon: <Folder />, level: 1, arrow: 'closed' },
  { label: 'ViewStationSHP', icon: <Folder />, level: 1, arrow: 'closed' },
  { label: 'Terrain_01', icon: <QgisLogo />, level: 1, arrow: 'closed' },
  { label: 'TerrainLabData01.zip', icon: <ZipIcon />, level: 1, arrow: 'closed' },
  { label: 'TerrainLabData02.zip', icon: <ZipIcon />, level: 1, arrow: 'closed' },
  { label: 'ViewStationSHP.zip', icon: <ZipIcon />, level: 1, arrow: 'closed' },
  { label: 'Week4Part1TerrainAnalysis.qmd', icon: <CodeIcon />, level: 1 },
  { label: 'Home', icon: <HomeIcon />, level: 0, arrow: 'closed' },
  { label: '/ (Macintosh HD)', icon: <Folder />, level: 0, arrow: 'closed' },
  { label: '/Volumes', icon: <Folder />, level: 0, arrow: 'closed' },
  { label: 'GeoPackage', icon: <GpkgIcon />, level: 0 },
  { label: 'SpatiaLite', icon: <SmallFeather />, level: 0 },
];

const browserIndent = ['pl-[2px]', 'pl-[34px]', 'pl-[66px]'];

const BrowserTree = () => (
  <div className="h-[835px] shrink-0 overflow-hidden border-t border-[#cfcfcf] bg-[#f6f6f6]">
    {browserRows.map((r) => (
      <div key={r.label} className={`flex h-[36px] items-center whitespace-nowrap text-[27px] ${browserIndent[r.level]} ${r.active ? 'bg-[#d9d9d9] text-black' : 'text-[#2e2e2e]'}`}>
        <div className="flex w-[32px] shrink-0 justify-center">
          {r.arrow && <Expander open={r.arrow === 'open'} />}
        </div>
        <div className="flex w-[42px] shrink-0 justify-center">{r.icon}</div>
        <span className="ml-[9px]">{r.label}</span>
      </div>
    ))}
  </div>
);

const DockHeader = ({ title, controls = false }: { title: string; controls?: boolean }) => (
  <div className="flex h-[40px] shrink-0 items-center justify-between pl-[8px] pr-[4px] text-[23.5px] text-[#333]">
    <span>{title}</span>
    {controls && (
      <div className="flex gap-[8px]">
        <svg width="22" height="24" viewBox="0 0 22 24">
          <rect x="1" y="1" width="20" height="22" rx="3" fill="none" stroke="#888" strokeWidth="1.5" />
          <path d="M8 6h8v10H8zM5 9h8v10H5z" fill="#f5f5f5" stroke="#555" strokeWidth="1.5" />
        </svg>
        <svg width="22" height="24" viewBox="0 0 22 24">
          <rect x="1" y="1" width="20" height="22" rx="3" fill="none" stroke="#888" strokeWidth="1.5" />
          <path d="M6 6l10 12M16 6L6 18" stroke="#333" strokeWidth="3" />
        </svg>
      </div>
    )}
  </div>
);

const AddRect = ({ color = '#5f9a66', sign = 'plus' }: { color?: string; sign?: string }) => (
  <Svg s={30}>
    <rect x="3" y="6" width="36" height="30" fill="#fafafa" stroke="#777" strokeWidth="3" />
    <rect x="26" y="30" width="20" height="14" rx="3" fill={color} />
    <path d={sign === 'plus' ? 'M36 32v10M31 37h10' : 'M31 37h10'} stroke="#fff" strokeWidth="3" />
  </Svg>
);
const Funnel = () => (
  <Svg s={30}>
    <path d="M3 5h42v6L29 27v17l-10-6V27L3 11z" fill="#5f8fc2" stroke="#37567c" strokeWidth="1.5" />
    <path d="M3 5h42v6H3z" fill="#f5d64a" stroke="#b79e12" />
  </Svg>
);
const TreeArrow = ({ down = false }: { down?: boolean }) => (
  <Svg s={30}>
    <path d="M4 10v30M4 12h14M4 24h14M4 38h14" stroke="#999" strokeWidth="2.5" />
    <rect x="12" y="12" width="9" height="7" fill="#f59a2c" />
    <rect x="12" y="30" width="9" height="7" fill="#f59a2c" />
    <path d={down ? 'M30 6h8v24h8L34 44 22 30h8z' : 'M34 4l12 16h-8v24h-8V20h-8z'} fill="#4d80b8" stroke="#2f5a8c" />
  </Svg>
);
const InfoBlue = () => (
  <Svg s={30}>
    <circle cx="24" cy="24" r="19" fill="#5f8fc2" stroke="#3a6a9c" strokeWidth="2" />
    <text x="24" y="34" fontSize="28" fontStyle="italic" fontWeight="700" textAnchor="middle" fill="#fff" fontFamily="Liberation Serif">i</text>
  </Svg>
);

const BrowserTools = () => (
  <div className="flex h-[62px] shrink-0 items-center gap-[20px] pl-[17px]">
    <AddRect />
    <RefreshIcon s={30} />
    <Funnel />
    <TreeArrow />
    <InfoBlue />
  </div>
);

const Brush = () => (
  <Svg s={30}>
    <path d="M2 30l14-10 12 12-8 6H8z" fill="#e8c44a" />
    <path d="M2 30l14-10 3 3-15 11z" fill="#d04a3a" />
    <path d="M6 38l4-2 8 4H8z" fill="#4d80b8" />
    <path d="M20 22L42 6l3 3-20 18z" fill="#c79a50" stroke="#8a6a2c" />
  </Svg>
);
const AddGroup = () => (
  <Svg s={30}>
    <rect x="2" y="18" width="34" height="24" fill="#fafafa" stroke="#777" strokeWidth="3" />
    <rect x="14" y="6" width="22" height="30" fill="#eee" stroke="#777" strokeWidth="3" />
    <path d="M20 2h9v22h-9z" fill="#fff" stroke="#555" strokeWidth="2" />
    <rect x="28" y="30" width="18" height="14" rx="3" fill="#5f9a66" />
    <path d="M37 32v10M32 37h10" stroke="#fff" strokeWidth="3" />
  </Svg>
);
const EyeIcon = () => (
  <Svg s={30}>
    <path d="M1 20C12 8 34 8 45 24c-12 14-34 12-44-4z" fill="#fff" stroke="#666" strokeWidth="2.5" />
    <circle cx="24" cy="21" r="10" fill="#5f8fc2" stroke="#37567c" strokeWidth="2" />
    <circle cx="24" cy="21" r="4" fill="#1f2c3c" />
  </Svg>
);
const MiniDrop = () => <div className="ml-[-8px] mt-[18px] h-0 w-0 border-x-[6px] border-t-[7px] border-x-transparent border-t-[#555]" />;

const ExprMini = () => (
  <Svg s={30}>
    <rect x="18" y="22" width="24" height="24" fill="#ccc" stroke="#888" />
    <path d="M22 4c-9-3-14 3-10 8-6 3-5 13 8 10" fill="none" stroke="#777" strokeWidth="3" />
  </Svg>
);

const LayerTools = () => (
  <div className="flex h-[63px] shrink-0 items-center pl-[17px]">
    <Brush />
    <div className="ml-[20px] flex"><AddGroup /></div>
    <div className="ml-[22px] flex"><EyeIcon /><MiniDrop /></div>
    <div className="ml-[20px] flex"><Funnel /><MiniDrop /></div>
    <div className="ml-[24px] flex opacity-30 grayscale"><ExprMini /></div>
    <DropArrow className="ml-[11px]" />
    <div className="ml-[17px] flex"><TreeArrow down /></div>
    <div className="ml-[20px] flex"><TreeArrow /></div>
    <div className="ml-[18px] flex"><AddRect color="#dd4a4a" sign="minus" /></div>
  </div>
);

const Ramp = ({ h, className }: { h: string; className: string }) => (
  <div className={`${h} w-[64px] bg-gradient-to-b ${className}`} />
);

const LayersTree = () => (
  <div className="flex min-h-0 flex-1 border-y border-[#c8c8c8] bg-white">
    <div className="w-[686px] overflow-hidden border-r border-[#c8c8c8] text-[27px] text-[#222]">
      <div className="flex h-[37px] items-center bg-[#d9d9d9]">
        <div className="flex w-[44px] justify-center"><Expander open /></div>
        <div className="ml-[5px] flex h-[27px] w-[27px] items-center justify-center border-2 border-[#b9b9b9] bg-white">
          <svg width="18" height="18" viewBox="0 0 18 18"><path d="M3 9l4 6 8-12" fill="none" stroke="#111" strokeWidth="2.5" /></svg>
        </div>
        <div className="ml-[17px]"><Raster /></div>
        <span className="ml-[15px] font-bold text-black underline">valley3</span>
      </div>
      <div className="flex h-[35px] items-center pl-[88px]">Band 1 (Gray)</div>
      <div className="flex pl-[88px]">
        <Ramp h="h-[383px]" className="from-white to-black" />
        <div className="ml-[13px] flex flex-col justify-between text-[27px] leading-[32px]">
          <span>267.655182</span>
          <span className="translate-y-[-1px]">181.426071</span>
        </div>
      </div>
      <div className="flex h-[37px] items-center">
        <div className="flex w-[44px] justify-center"><Expander open /></div>
        <div className="ml-[5px] h-[27px] w-[27px] border-2 border-[#b9b9b9] bg-white" />
        <div className="ml-[17px]"><Raster /></div>
        <span className="ml-[15px] font-bold italic text-[#808080]">valley9</span>
      </div>
      <div className="flex h-[35px] items-center pl-[88px]">Band 1 (Gray)</div>
      <div className="flex pl-[88px]">
        <Ramp h="h-[304px]" className="from-white to-[#3a3a3a]" />
        <span className="ml-[13px] text-[27px] leading-[32px]">378.178253</span>
      </div>
    </div>
    <div className="flex w-[30px] flex-col border-r border-[#c8c8c8] bg-[#fafafa]">
      <div className="flex h-[28px] items-center justify-center border-b border-[#ccc]">
        <div className="h-0 w-0 border-x-[8px] border-b-[7px] border-x-transparent border-b-[#555]" />
      </div>
      <div className="flex-1" />
      <div className="h-[70px] border-y border-[#ccc] bg-[#efefef]" />
      <div className="flex h-[28px] items-center justify-center">
        <div className="h-0 w-0 border-x-[8px] border-t-[7px] border-x-transparent border-t-[#555]" />
      </div>
    </div>
  </div>
);

const LeftDock = () => (
  <div className="flex w-[724px] shrink-0 flex-col bg-[#f6f6f6]">
    <DockHeader title="Browser" controls />
    <BrowserTools />
    <BrowserTree />
    <div className="flex h-[12px] shrink-0 items-center justify-center border-t-2 border-[#d0d0d0]">
      <div className="ml-[4px] w-[36px] border-t-2 border-dotted border-[#c4c4c4]" />
    </div>
    <DockHeader title="Layers" />
    <LayerTools />
    <LayersTree />
  </div>
);

const Terrain = () => (
  <svg className="absolute left-0 top-0 h-full w-full" viewBox="731 213 1755 1885" preserveAspectRatio="none">
    <defs>
      <linearGradient id="terrainFill" x1="0" y1="0" x2="0" y2="1">
        <stop offset="0" stopColor="#232323" />
        <stop offset="0.5" stopColor="#2e2e2e" />
        <stop offset="1" stopColor="#363636" />
      </linearGradient>
      <filter id="soft" x="-5%" y="-5%" width="110%" height="110%">
        <feGaussianBlur stdDeviation="13 13" />
      </filter>
      <clipPath id="outer">
        <polygon points="60,0 70,45 100,130 130,250 145,150 185,148 212,120 207,220 222,305 235,320 248,450 220,450 200,390 165,310 152,305 180,420 200,510 240,600 300,710 350,790 395,880 420,900 465,905 470,920 490,925 520,932 590,935 630,930 680,900 720,860 745,850 790,800 840,790 870,750 920,745 990,720 1040,770 1090,840 1120,840 1150,730 1190,765 1205,715 1180,640 1180,510 1230,425 1280,390 1330,240 1380,240 1390,270 1450,245 1490,325 1525,270 1530,200 1540,170 1540,0 870,0 830,90 740,170 670,240 590,235 560,265 530,250 490,265 440,230 400,130 400,90 360,0" />
      </clipPath>
    </defs>
    <g transform="translate(980 1220) scale(0.931 0.3333)">
      <g clipPath="url(#outer)">
        <rect x="0" y="0" width="1600" height="1000" fill="#d4d4d4" />
        <polygon
          filter="url(#soft)"
          fill="url(#terrainFill)"
          points="40,-40 110,160 150,150 212,105 190,220 205,305 220,330 250,450 270,530 280,620 310,700 390,875 480,900 600,880 660,850 720,780 790,730 860,680 960,665 1020,700 1040,750 1070,880 1140,880 1150,730 1220,800 1240,715 1210,640 1210,510 1260,425 1310,360 1345,220 1380,215 1390,290 1450,225 1490,365 1560,270 1560,200 1590,170 1590,-40 880,-40 840,80 770,170 680,270 590,300 530,305 460,300 430,250 380,130 380,90 340,-40"
        />
        <path
          d="M230 60C300 130 380 160 400 200L440 380 480 440 520 580 590 760 650 810 700 770 740 670C770 640 790 680 810 715L880 585C900 570 930 620 960 635L1080 635 1200 470 1290 290 1360 60"
          fill="none"
          stroke="#232323"
          strokeWidth="5"
          vectorEffect="non-scaling-stroke"
        />
      </g>
    </g>
  </svg>
);

const Canvas = () => (
  <div className="relative ml-[6px] mr-[13px] flex-1 border-x border-[#c8c8c8] bg-white">
    <Terrain />
    <div className="absolute right-[-9px] top-[940px] h-[32px] border-l-2 border-dotted border-[#c8c8c8]" />
  </div>
);

const Wrench = () => (
  <Svg s={30}>
    <path d="M6 6c4-4 10-3 12 1 2 3 1 5 1 5l22 26-6 6-23-25s-3 1-6-1c-4-3-4-8-2-11l5 5 4-3z" fill="#eccb6f" stroke="#333" strokeWidth="2" />
  </Svg>
);
const Gears = () => (
  <Svg s={36}>
    <circle cx="15" cy="14" r="11" fill="#cc0f1e" />
    <circle cx="33" cy="24" r="9" fill="#8a8a8a" />
    <circle cx="20" cy="38" r="7" fill="#8fb0d8" />
    <path d="M15 0v28M1 14h28M5 4l20 20M25 4L5 24" stroke="#cc0f1e" strokeWidth="3" />
    <path d="M38 38l-8 0 4 6z" fill="#555" />
  </Svg>
);
const EditDim = () => (
  <Svg s={32} dim>
    <rect x="6" y="2" width="26" height="34" fill="#ccc" stroke="#999" />
    <path d="M40 14l4 3-12 28-5 2 0-6z" fill="#eee" stroke="#999" />
  </Svg>
);
const Cube = () => (
  <svg width="26" height="30" viewBox="0 0 26 30" className="shrink-0">
    <path d="M13 1l11 6v16l-11 6-11-6V7zM13 15V29M2 7l11 8 11-8" fill="#fbfbfb" stroke="#9a9a9a" strokeWidth="1.2" />
  </svg>
);
const GdalIcon = () => (
  <svg width="32" height="34" viewBox="0 0 32 34" className="shrink-0">
    <circle cx="19" cy="15" r="12" fill="#59b5dc" />
    <path d="M15 8l8 4-5 6z" fill="#b2432d" />
    <path d="M4 1l10 10M2 7l8-6" stroke="#222" strokeWidth="2" />
    <text x="1" y="29" fontSize="11" fontWeight="700" fill="#111" fontFamily="Liberation Sans">GDAL</text>
  </svg>
);

const toolboxRows: Row[] = [
  { label: 'Raster terrain analysis', icon: <QgisLogo />, level: 0, arrow: 'open' },
  { label: 'Hillshade', icon: <Gear s={30} fill="#7d9fd4" />, level: 1, active: true },
  { label: 'GDAL', icon: <GdalIcon />, level: 0, arrow: 'open' },
  { label: 'Raster analysis', icon: null, level: 1, arrow: 'open' },
  { label: 'Hillshade', icon: <GdalIcon />, level: 2 },
  { label: 'WhiteboxTools', icon: <Cube />, level: 0, arrow: 'open' },
  { label: 'Geomorphometric Analysis', icon: null, level: 1, arrow: 'open' },
  { label: 'Hillshade', icon: <Cube />, level: 2 },
  { label: 'HypsometricallyTintedHillshade', icon: <Cube />, level: 2 },
  { label: 'MultidirectionalHillshade', icon: <Cube />, level: 2 },
  { label: 'LiDAR Tools', icon: null, level: 1, arrow: 'open' },
  { label: 'LidarHillshade', icon: <Cube />, level: 2 },
];

const toolboxIndent = ['pl-[3px]', 'pl-[43px]', 'pl-[83px]'];

const ClearIcon = ({ className = '' }: { className?: string }) => (
  <svg width="26" height="20" viewBox="0 0 26 20" className={`shrink-0 ${className}`}>
    <path d="M7 0h19v20H7L0 10z" fill="#8f8f8f" />
    <path d="M11 5l10 10M21 5L11 15" stroke="#fff" strokeWidth="2" />
  </svg>
);

const Search = () => (
  <svg width="26" height="26" viewBox="0 0 26 26" className="shrink-0">
    <circle cx="11" cy="11" r="8.5" fill="none" stroke="#999" strokeWidth="2" />
    <path d="M17 17l7 7" stroke="#999" strokeWidth="3" />
  </svg>
);

const RightDock = () => (
  <div className="flex w-[956px] shrink-0 flex-col bg-[#f6f6f6]">
    <DockHeader title="Processing Toolbox" controls />
    <div className="flex h-[61px] shrink-0 items-center pl-[18px]">
      <Gears />
      <div className="ml-[15px] flex"><Python s={32} arrow={false} /></div>
      <div className="ml-[17px]"><ClockIcon s={32} /></div>
      <svg width="24" height="32" viewBox="0 0 24 32" className="ml-[21px]">
        <path d="M3 1h12l7 7v23H3z" fill="#fff" stroke="#777" strokeWidth="1.5" />
        <path d="M7 12h11M7 17h11M7 22h11" stroke="#777" strokeWidth="1.5" />
      </svg>
      <div className="ml-[19px] h-[36px] w-[2px] bg-[#ddd]" />
      <div className="ml-[14px]"><EditDim /></div>
      <div className="ml-[15px] h-[36px] w-[2px] bg-[#ddd]" />
      <div className="ml-[18px]"><Wrench /></div>
    </div>
    <div className="flex h-[47px] shrink-0 items-center rounded-[6px] border-2 border-[#b9b9b9] bg-white pl-[15px] pr-[17px]">
      <Search />
      <span className="ml-[16px] flex-1 text-[27px] text-[#222]">hillshade</span>
      <ClearIcon />
    </div>
    <div className="mt-[2px] flex-1 border-l border-t border-[#c8c8c8] bg-white pt-[2px]">
      {toolboxRows.map((r, i) => (
        <div key={i} className={`flex h-[35px] items-center whitespace-nowrap text-[27px] text-[#2a2a2a] ${toolboxIndent[r.level]} ${r.active ? 'bg-[#dcdcdc] text-black' : ''}`}>
          <div className="flex w-[38px] shrink-0 justify-center">
            {r.arrow && <Expander open />}
          </div>
          {r.icon ? (
            <div className="flex w-[44px] shrink-0 justify-center">{r.icon}</div>
          ) : (
            <div className="w-[1px] shrink-0" />
          )}
          <span className="ml-[7px]">{r.label}</span>
        </div>
      ))}
    </div>
  </div>
);

const SpinBtns = () => (
  <div className="flex h-full w-[28px] shrink-0 flex-col items-center justify-center gap-[9px] border-l border-[#bbb]">
    <div className="h-0 w-0 border-x-[7px] border-b-[8px] border-x-transparent border-b-[#555]" />
    <div className="h-0 w-0 border-x-[7px] border-t-[8px] border-x-transparent border-t-[#555]" />
  </div>
);

const SpinInput = ({ value, clear = false }: { value: string; clear?: boolean }) => (
  <div className="flex h-[44px] items-center rounded-[6px] border-2 border-[#b9b9b9] bg-white pl-[8px] text-[27.5px] text-[#222]">
    <span className="flex-1">{value}</span>
    {clear && <ClearIcon className="mr-[21px]" />}
    <SpinBtns />
  </div>
);

const Label = ({ children }: { children: ReactNode }) => (
  <div className="flex h-[32px] items-center text-[27px] text-[#333]">{children}</div>
);

const Dots = ({ text, drop = false, tall = false }: { text: string; drop?: boolean; tall?: boolean }) => (
  <div className={`relative flex w-[46px] shrink-0 items-center justify-center rounded-[6px] border-2 border-[#c0c0c0] bg-white text-[22px] leading-none text-[#333] ${tall ? 'h-[46px]' : 'h-[37px]'}`}>
    {text}
    {drop && <div className="absolute bottom-[6px] right-[4px] h-0 w-0 border-x-[5px] border-t-[6px] border-x-transparent border-t-[#555]" />}
  </div>
);

const DialogButton = ({ children, className = '' }: { children: ReactNode; className?: string }) => (
  <div className={`flex h-[46px] items-center justify-center rounded-[6px] border-2 border-[#bdbdbd] bg-gradient-to-b from-[#fefefe] to-[#f5f5f5] text-[27px] text-[#1c1c1c] ${className}`}>
    {children}
  </div>
);

const ParamsForm = () => (
  <div className="w-[1366px] shrink-0">
    <div className="flex h-[51px] items-end text-[27px]">
      <div className="flex h-[51px] w-[188px] items-center justify-center rounded-t-[6px] border-2 border-b-0 border-[#bdbdbd] bg-[#f7f7f7] text-[#2a2a2a]">Parameters</div>
      <div className="flex h-[47px] w-[93px] items-center justify-center rounded-t-[6px] border-2 border-b-0 border-l-0 border-[#bdbdbd] bg-[#ececec] text-[#2a2a2a]">Log</div>
    </div>
    <div className="h-[623px] border-2 border-t-2 border-[#bdbdbd] border-l-[#d4d4d4] border-b-[#d4d4d4] bg-[#f6f6f6] px-[10px]">
      <div className="mx-[-10px] h-[14px] bg-white" />
      <div className="mt-[10px]"><Label>Elevation layer</Label></div>
      <div className="mt-[11px] flex gap-[12px]">
        <div className="flex h-[46px] flex-1 items-center rounded-[6px] border-2 border-[#b9b9b9] bg-gradient-to-b from-[#fcfcfc] to-[#f2f2f2] pl-[14px] pr-[14px] text-[27.5px] text-[#111]">
          <Raster />
          <span className="ml-[8px] flex-1">valley3 [EPSG:26915]</span>
          <div className="h-0 w-0 border-x-[7px] border-t-[8px] border-x-transparent border-t-[#444]" />
        </div>
        <Dots text="..." />
      </div>
      <div className="mt-[15px]"><Label>Z factor</Label></div>
      <div className="mt-[14px]"><SpinInput value="1.000000" /></div>
      <div className="mt-[15px]"><Label>Azimuth (horizontal angle)</Label></div>
      <div className="mt-[14px]"><SpinInput value="315.000000" clear /></div>
      <div className="mt-[15px]"><Label>Vertical angle</Label></div>
      <div className="mt-[15px]"><SpinInput value="25.000000" clear /></div>
      <div className="mt-[15px]"><Label>Hillshade</Label></div>
      <div className="mt-[13px] flex gap-[12px]">
        <div className="flex h-[46px] flex-1 items-center rounded-[6px] border-2 border-[#b9b9b9] bg-white pl-[4px] pr-[18px] text-[26.5px] text-[#222]">
          <span className="flex-1 whitespace-nowrap">/Users/maples/Scratch/144 Labs/Week 05/Week 4 Part 1 Terrain Analysis/L10/hillshade3.tif</span>
          <ClearIcon />
        </div>
        <Dots text="..." drop tall />
      </div>
      <div className="mt-[17px] flex items-center text-[27px] text-[#333]">
        <div className="flex h-[27px] w-[27px] items-center justify-center border-2 border-[#c2c2c2] bg-white">
          <svg width="18" height="20" viewBox="0 0 18 20"><path d="M3 11l4 7L15 2" fill="none" stroke="#222" strokeWidth="2.5" /></svg>
        </div>
        <span className="ml-[12px]">Open output file after running algorithm</span>
      </div>
    </div>
  </div>
);

const Dialog = () => (
  <div className="absolute left-[422px] top-[290px] flex h-[945px] w-[1998px] flex-col overflow-hidden rounded-[16px] border-2 border-[#3a3a3a] bg-[#f6f6f6] shadow-[0_30px_100px_rgba(0,0,0,0.48)]">
    <div className="relative flex h-[58px] shrink-0 items-center justify-center border-b-2 border-black bg-white">
      <div className="absolute left-[14px] flex gap-[16px]">
        <div className="h-[24px] w-[24px] rounded-full bg-[#e0291c]" />
        <div className="h-[24px] w-[24px] rounded-full border border-[#aaa] bg-[#d6d6d6]" />
        <div className="h-[24px] w-[24px] rounded-full bg-[#3b8a22]" />
      </div>
      <span className="ml-[-3px] text-[28px] font-semibold text-[#3a3a3a]">Hillshade</span>
    </div>
    <div className="flex pl-[20px] pt-[21px]">
      <ParamsForm />
      <div className="flex w-[34px] shrink-0 flex-col items-center">
        <div className="ml-[-2px] mt-[3px] h-0 w-0 border-y-[8px] border-l-[8px] border-y-transparent border-l-[#555]" />
        <div className="mt-[306px] h-[32px] border-l-2 border-dotted border-[#ccc]" />
      </div>
      <div className="h-[676px] w-[551px] shrink-0 border-2 border-[#d0d0d0] bg-white pl-[9px] pr-[4px] text-[27px] leading-[32px] text-[#5a5a5a]">
        <div className="mt-[10px] text-[41px] font-bold leading-[44px] text-[#4d4d4d]">Hillshade</div>
        <p className="mt-[24px]">This algorithm calculates the hillshade of the Digital Terrain Model in input.</p>
        <p className="mt-[24px]">The shading of the layer is calculated according to the sun position (azimuth and elevation).</p>
      </div>
    </div>
    <div className="mt-[58px] flex px-[20px]">
      <div className="flex h-[46px] w-[1780px] items-center justify-center rounded-[4px] border-2 border-[#c0c0c0] bg-white text-[26px] text-[#333]">0%</div>
      <div className="ml-[12px] flex h-[46px] w-[159px] items-center justify-center rounded-[6px] border-2 border-[#dcdcdc] bg-[#f4f4f4] text-[27px] text-[#999]">Cancel</div>
    </div>
    <div className="mt-[14px] flex pl-[20px] pr-[23px]">
      <DialogButton className="w-[160px]">Help</DialogButton>
      <DialogButton className="ml-[13px] w-[158px] gap-[8px]">
        Advanced
        <div className="h-0 w-0 border-x-[5px] border-t-[6px] border-x-transparent border-t-[#555]" />
      </DialogButton>
      <DialogButton className="ml-[12px] w-[298px]">Run as Batch Process...</DialogButton>
      <div className="flex-1" />
      <DialogButton className="w-[160px]">Close</DialogButton>
      <DialogButton className="ml-[12px] w-[159px] border-[#4d90e0] from-[#f8fbff] to-[#e9f0fa]">Run</DialogButton>
    </div>
  </div>
);

const StatusField = ({ children, className = '' }: { children: ReactNode; className?: string }) => (
  <div className={`flex h-[44px] items-center rounded-[4px] border-2 border-[#bcbcbc] bg-white ${className}`}>{children}</div>
);

const StatusBar = () => (
  <div className="flex h-[62px] shrink-0 items-center bg-[#f6f6f6] text-[24px] text-[#2a2a2a]">
    <div className="ml-[8px] flex h-[46px] w-[427px] items-center rounded-[8px] border-2 border-[#c4c4c4] bg-white pl-[15px] text-[#666]">
      <Search />
      <span className="ml-[14px] text-[27px]">Type to locate (⌘K)</span>
    </div>
    <span className="ml-[1275px]">Coordinate</span>
    <StatusField className="ml-[7px] w-[224px] pl-[22px]">629178,4855121</StatusField>
    <svg width="30" height="36" viewBox="0 0 30 36" className="ml-[7px]">
      <rect x="6" y="2" width="14" height="30" rx="7" transform="rotate(-20 13 17)" fill="#fff" stroke="#222" strokeWidth="3" />
      <path d="M6 6l20 24" stroke="#222" strokeWidth="4" />
    </svg>
    <span className="ml-[26px]">Scale</span>
    <StatusField className="ml-[5px] w-[184px] pl-[6px]">
      <span className="flex-1">1:79132</span>
      <div className="flex h-full w-[40px] items-center justify-center border-l border-[#ddd]">
        <div className="h-0 w-0 border-x-[7px] border-t-[10px] border-x-transparent border-t-[#555]" />
      </div>
    </StatusField>
    <svg width="26" height="36" viewBox="0 0 26 36" className="ml-[24px]">
      <path d="M6 16V9c0-9 14-9 14 0v7" fill="none" stroke="#999" strokeWidth="3" />
      <rect x="3" y="16" width="20" height="19" rx="2" fill="#666" />
    </svg>
    <span className="ml-[18px]">Magnifier</span>
    <StatusField className="ml-[8px] w-[184px] pl-[8px]">
      <span className="flex-1">100%</span>
      <SpinBtns />
    </StatusField>
    <span className="ml-[19px]">Rotation</span>
    <StatusField className="ml-[17px] w-[186px] pl-[10px]">
      <span className="flex-1">0.0 °</span>
      <SpinBtns />
    </StatusField>
    <div className="ml-[12px] flex h-[27px] w-[27px] items-center justify-center border-2 border-[#c2c2c2] bg-white">
      <svg width="18" height="20" viewBox="0 0 18 20"><path d="M3 11l4 7L15 2" fill="none" stroke="#222" strokeWidth="2.5" /></svg>
    </div>
    <span className="ml-[10px]">Render</span>
    <svg width="30" height="30" viewBox="0 0 30 30" className="ml-[31px]">
      <ellipse cx="15" cy="15" rx="12" ry="14" fill="#ddd" stroke="#555" strokeWidth="1.5" />
      <ellipse cx="15" cy="15" rx="5" ry="14" fill="none" stroke="#555" strokeWidth="1.5" />
      <path d="M3 10h24M3 20h24" stroke="#555" strokeWidth="1.5" />
    </svg>
    <span className="ml-[4px]">EPSG:26915</span>
    <svg width="30" height="38" viewBox="0 0 30 38" className="ml-[50px]">
      <path d="M15 1c9 0 14 6 14 16 0 9-6 15-12 15l-1 6-5-7C4 29 1 24 1 17 1 7 6 1 15 1z" fill="#666" />
      <circle cx="9" cy="16" r="2" fill="#fff" />
      <circle cx="15" cy="16" r="2" fill="#fff" />
      <circle cx="21" cy="16" r="2" fill="#fff" />
    </svg>
  </div>
);

export default function App() {
  return (
    <div className="relative h-[2160px] w-[3456px] overflow-hidden bg-black [font-family:Roboto,sans-serif]">
      <div className="mt-[2px] flex h-[2158px] flex-col overflow-hidden rounded-[14px] bg-[#f6f6f6]">
        <div className="relative flex h-[58px] shrink-0 items-center justify-center border-b-2 border-black bg-[#fdfdfd]">
          <div className="absolute left-[16px] flex gap-[16px]">
            <div className="h-[24px] w-[24px] rounded-full border border-[#a2a2a2] bg-[#b4b4b4]" />
            <div className="h-[24px] w-[24px] rounded-full border border-[#a2a2a2] bg-[#b4b4b4]" />
            <div className="h-[24px] w-[24px] rounded-full border border-[#a2a2a2] bg-[#b4b4b4]" />
          </div>
          <span className="text-[29px] font-semibold text-[#3a3a3a]">*Terrain_01 — QGIS [10-15-2022]</span>
        </div>
        <TopToolbar />
        <BottomToolbar />
        <div className="flex min-h-0 flex-1">
          <LeftDock />
          <Canvas />
          <RightDock />
        </div>
        <StatusBar />
      </div>
      <Dialog />
    </div>
  );
}
